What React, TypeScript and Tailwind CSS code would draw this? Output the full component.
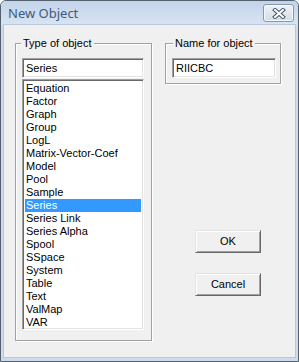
import React from "react";

const items = [
  "Equation",
  "Factor",
  "Graph",
  "Group",
  "LogL",
  "Matrix-Vector-Coef",
  "Model",
  "Pool",
  "Sample",
  "Series",
  "Series Link",
  "Series Alpha",
  "Spool",
  "SSpace",
  "System",
  "Table",
  "Text",
  "ValMap",
  "VAR",
];

const sunken =
  "border border-t-[#a0a0a0] border-l-[#a0a0a0] border-b-white border-r-white shadow-[inset_1px_1px_0_#696969,inset_-1px_-1px_0_#e3e3e3] bg-white";

const raised =
  "border border-t-[#e3e3e3] border-l-[#e3e3e3] border-b-[#696969] border-r-[#696969] shadow-[inset_1px_1px_0_#ffffff,inset_-1px_-1px_0_#a0a0a0] bg-[#f0f0f0]";

const etched =
  "relative border border-[#a0a0a0] shadow-[1px_1px_0_#ffffff,inset_1px_1px_0_#ffffff]";

export default function App() {
  return (
    <div
      className="w-[299px] h-[362px] flex flex-col rounded-t-[6px] border border-[#55606f] bg-[#cddbec] overflow-hidden text-[11px] leading-[13px] text-black"
      style={{ fontFamily: '"Liberation Sans", Arial, sans-serif' }}
    >
      {/* title bar */}
      <div className="h-[24px] flex items-start justify-between bg-gradient-to-b from-[#c3d4e9] to-[#d8e4f2] shrink-0">
        <div
          className="pl-[7px] pt-[4px] text-[13px] leading-[16px] text-[#3e5a7d]"
          style={{ fontFamily: '"Noto Sans", "Open Sans", sans-serif' }}
        >
          New Object
        </div>
        <div className="mt-[3px] mr-[4px] w-[31px] h-[18px] rounded-[3px] border border-[#8797ae] bg-gradient-to-b from-[#eef3f9] to-[#d2ddeb] shadow-[inset_0_0_0_1px_#f6f9fc] flex items-center justify-center">
          <svg width="14" height="11" viewBox="0 0 14 11">
            <path
              d="M3 2 L11 9 M11 2 L3 9"
              stroke="#4b5566"
              strokeWidth="4"
              strokeLinecap="square"
              fill="none"
            />
            <path
              d="M3 2 L11 9 M11 2 L3 9"
              stroke="#ffffff"
              strokeWidth="2"
              strokeLinecap="square"
              fill="none"
            />
          </svg>
        </div>
      </div>

      {/* frame + client */}
      <div className="flex-1 flex px-[3px] pb-[4px] min-h-0">
        <div className="flex-1 bg-[#f0f0f0] shadow-[0_0_0_1px_#b8c7da] flex items-start pl-[11px] pt-[18px]">
          {/* Type of object group */}
          <div className={`${etched} w-[137px] h-[298px] pl-[6px] pt-[14px]`}>
            <div className="absolute left-[5px] -top-[7px] px-[2px] bg-[#f0f0f0]">
              Type of object
            </div>
            <div className={`${sunken} w-[122px] h-[20px] flex items-center pl-[3px]`}>
              Series
            </div>
            <div className={`${sunken} mt-[1px] w-[122px] h-[251px] p-[2px] overflow-hidden`}>
              {items.map((it) => (
                <div
                  key={it}
                  className={`h-[13px] pl-[1px] whitespace-nowrap ${
                    it === "Series" ? "bg-[#3399ff] text-white" : ""
                  }`}
                >
                  {it}
                </div>
              ))}
            </div>
          </div>

          {/* right column */}
          <div className="ml-[13px] flex flex-col">
            <div className={`${etched} w-[116px] h-[41px] pl-[6px] pt-[14px]`}>
              <div className="absolute left-[7px] -top-[7px] px-[2px] bg-[#f0f0f0]">
                Name for object
              </div>
              <div className={`${sunken} w-[104px] h-[20px] flex items-center pl-[3px]`}>
                RIICBC
              </div>
            </div>
            <div className="ml-[30px] mt-[146px] flex flex-col gap-[20px]">
              <div className={`${raised} w-[66px] h-[23px] flex items-center justify-center`}>
                OK
              </div>
              <div className={`${raised} w-[66px] h-[23px] flex items-center justify-center`}>
                Cancel
              </div>
            </div>
          </div>
        </div>
      </div>
    </div>
  );
}
